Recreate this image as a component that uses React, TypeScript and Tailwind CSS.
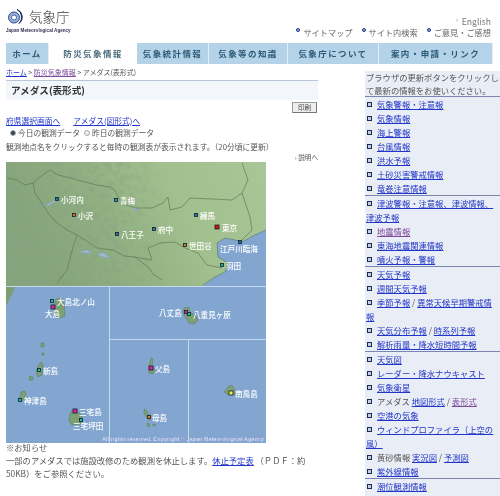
// App.tsx
const navTabs = [
  { label: 'ホーム', width: 'w-[43px]', active: false },
  { label: '防災気象情報', width: 'w-[88px]', active: true },
  { label: '気象統計情報', width: 'w-[72px]', active: false },
  { label: '気象等の知識', width: 'w-[79px]', active: false },
  { label: '気象庁について', width: 'w-[91px]', active: false },
  { label: '案内・申請・リンク', width: 'w-[114px]', active: false },
];

type Station = { x: number; y: number; c: string; name: string; lx: number; ly: number; big?: boolean };

const stations: Station[] = [
  { x: 51, y: 37, c: '#2a6fb0', name: '小河内', lx: 55, ly: 40.5 },
  { x: 68, y: 53, c: '#d8761c', name: '小沢', lx: 72, ly: 56.5 },
  { x: 110, y: 38, c: '#2a8fb0', name: '青梅', lx: 114, ly: 41.5 },
  { x: 111, y: 72, c: '#2a6fb0', name: '八王子', lx: 115, ly: 75.5 },
  { x: 148, y: 67, c: '#2a7fb0', name: '府中', lx: 152, ly: 70.5 },
  { x: 190, y: 53, c: '#2a6fb0', name: '練馬', lx: 194, ly: 56.5 },
  { x: 211, y: 65, c: '#e01010', name: '東京', lx: 216, ly: 68.5, big: true },
  { x: 179, y: 83, c: '#d8761c', name: '世田谷', lx: 183, ly: 86.5 },
  { x: 234, y: 80, c: '#2a6fb0', name: '江戸川臨海', lx: 214, ly: 89.5 },
  { x: 216, y: 103, c: '#20b090', name: '羽田', lx: 220, ly: 106.5 },
  { x: 46, y: 139, c: '#20c0b0', name: '大島北ノ山', lx: 51, ly: 142.5 },
  { x: 47, y: 145, c: '#e020b0', name: '大島', lx: 39, ly: 154.5, big: true },
  { x: 180, y: 150, c: '#e020b0', name: '八丈島', lx: 153, ly: 153.5 },
  { x: 183, y: 152, c: '#20c0b0', name: '八重見ヶ原', lx: 187, ly: 155.5 },
  { x: 33, y: 208, c: '#20c0b0', name: '新島', lx: 37, ly: 211.5 },
  { x: 14, y: 238, c: '#20c0b0', name: '神津島', lx: 18, ly: 241.5 },
  { x: 69, y: 249, c: '#e020b0', name: '三宅島', lx: 73, ly: 252.5, big: true },
  { x: 75, y: 258, c: '#20c0b0', name: '三宅坪田', lx: 67, ly: 266.5 },
  { x: 145, y: 206, c: '#e020b0', name: '父島', lx: 149, ly: 209.5, big: true },
  { x: 143, y: 255, c: '#e8801c', name: '母島', lx: 146, ly: 258.5 },
  { x: 225, y: 231, c: '#f4f040', name: '南鳥島', lx: 229, ly: 234.5, big: true },
];

const islands = [
  'M50 137 L55 136 L58 142 L59 154 L54 156 L49 153 L47 146 Z',
  'M35 200 L37 203 L36 213 L32 215 L30 210 L32 204 Z',
  'M24 214 L27 215 L27 218 L23 218 Z',
  'M35 181 L38 181 L38 185 L35 185 Z',
  'M36 191 L38 191 L38 193 L36 193 Z',
  'M15 230 L19 229 L20 234 L16 239 L14 236 Z',
  'M66 248 L71 249 L76 254 L75 262 L66 263 L63 259 L64 252 Z',
  'M178 146 L183 145 L184 150 L190 154 L192 158 L188 162 L183 161 L180 156 L177 151 Z',
  'M145 196 L147 197 L146 204 L149 208 L147 212 L143 211 L143 204 Z',
  'M138 247 L141 249 L145 256 L144 259 L141 256 L138 251 Z',
  'M141 261 L144 262 L143 265 L141 264 Z',
  'M147 262 L150 263 L149 264 L147 264 Z',
  'M223 224 L226 223 L229 229 L229 233 L221 232 L218 230 Z',
];

function TokyoMap() {
  return (
    <svg viewBox="0 0 260 281" className="block w-[260px] h-[281px]">
      <defs>
        <linearGradient id="land" x1="0" y1="0.25" x2="1" y2="0">
          <stop offset="0" stopColor="#84a47b" />
          <stop offset="0.35" stopColor="#93b282" />
          <stop offset="0.6" stopColor="#a2bf8e" />
          <stop offset="1" stopColor="#a9c697" />
        </linearGradient>
        <linearGradient id="fade" x1="0" y1="0" x2="1" y2="0">
          <stop offset="0" stopColor="#fff" />
          <stop offset="0.42" stopColor="#fff" />
          <stop offset="0.62" stopColor="#000" />
        </linearGradient>
        <mask id="reliefMask">
          <rect width="260" height="124" fill="url(#fade)" />
        </mask>
        <filter id="relief" x="0" y="0" width="1" height="1">
          <feTurbulence type="fractalNoise" baseFrequency="0.16" numOctaves="3" seed="7" />
          <feColorMatrix values="0 0 0 0 0.25  0 0 0 0 0.36  0 0 0 0 0.24  3 0 0 0 -1.25" />
        </filter>
      </defs>
      <rect width="260" height="281" fill="#82a6d0" />
      <rect width="260" height="124" fill="url(#land)" />
      <g mask="url(#reliefMask)" opacity="0.55">
        <rect width="260" height="124" filter="url(#relief)" />
      </g>
      <path
        d="M260 68 L249 73 L236 80 L229 78 L219 76 L211 81 L212 95 L222 101 L219 110 L209 115 L197 124 H260 Z"
        fill="#82a6d0"
      />
      <path
        d="M260 68 L249 73 L236 80 L229 78 L219 76 L211 81 L212 95 L222 101 L219 110 L209 115 L197 123"
        fill="none"
        stroke="#6b8a84"
        strokeWidth="0.9"
      />
      <path d="M38 43 L45 41 L52 36 L50 39 L44 43 Z M74 90 L80 88 L86 91 L80 91 Z M91 92 L98 91 L104 96 L97 95 Z M126 45 L134 48 L128 48 Z" fill="#9fbad4" stroke="#88a6c8" strokeWidth="0.6" />
      <g fill="none" stroke="#5d7a58" strokeWidth="0.7">
        <path d="M1 16 L11 18 L19 23 L27 21 L34 15 L44 8 L52 13 L61 15 L71 18 L91 23 L104 25 L109 28 L112 35 L118 42 L129 46 L146 46 L157 41 L162 35 L164 48 L176 45 L184 36 L206 37 L226 38 L236 31 L242 18 L236 1" />
        <path d="M236 31 L244 55 L246 68 L236 78" />
        <path d="M27 21 L29 31 L37 43 L42 51 L51 61 L61 68 L71 73 L79 78 L91 86 L107 88 L118 94 L129 95 L142 105 L147 112 L156 118 M129 95 L146 98 L142 86 L154 81 L169 80 L179 86 L192 91 L201 103 L216 106" />
        <path d="M71 73 L67 85 L61 108 L51 121" />
      </g>
      <path d="M0 125 H9 L6 132 L2 140 L0 144 Z" fill="#7d9e72" />
      <g fill="#7c9f74" stroke="#55785a" strokeWidth="0.5">
        {islands.map((d, i) => (
          <path key={i} d={d} />
        ))}
      </g>
      <g stroke="#c4d8ee" strokeWidth="1" fill="none">
        <path d="M0 124.5 H260" />
        <path d="M103.5 124 V281" />
        <path d="M103 177.5 H260" />
        <path d="M182.5 177 V281" />
      </g>
      {stations.map((s) => (
        <rect
          key={s.name}
          x={s.x - (s.big ? 2 : 1.5)}
          y={s.y - (s.big ? 2 : 1.5)}
          width={s.big ? 4 : 3}
          height={s.big ? 4 : 3}
          fill={s.c}
          stroke="#10202c"
          strokeWidth="0.8"
        />
      ))}
      <g fill="#fff" fontSize="7.6" fontWeight="500" fontFamily="'Noto Sans CJK JP', sans-serif">
        {stations.map((s) => (
          <text key={s.name} x={s.lx} y={s.ly}>
            {s.name}
          </text>
        ))}
      </g>
      <text x="96" y="279" fill="#eef2fb" fontSize="5.5" fontWeight="700" fontFamily="'Liberation Sans', sans-serif" stroke="#6a78c0" strokeWidth="0.15">
        All rights reserved. Copyright © Japan Meteorological Agency
      </text>
    </svg>
  );
}

function Square() {
  return <span className="inline-block w-[3px] h-[3px] border border-[#1c2c50] bg-[#c4cee4] ml-[1px] mr-[5px] align-[1px] box-content" />;
}

const A = ({ children, visited }: { children: React.ReactNode; visited?: boolean }) => (
  <a href="#" className={visited ? 'underline text-[#7d4a9c]' : 'underline text-[#2236c8]'}>
    {children}
  </a>
);

function Group({ rows, last }: { rows: React.ReactNode[]; last?: boolean }) {
  return (
    <ul className={last ? '' : 'border-b border-[#7c84b0]'}>
      {rows.map((r, i) => (
        <li key={i} className="pl-[1px]">
          <Square />
          {r}
        </li>
      ))}
    </ul>
  );
}

function Sidebar() {
  return (
    <aside className="w-[135px] bg-[#e9edf5] text-[8.3px] leading-[14px] text-[#555] mt-[7px] shrink-0 overflow-hidden">
      <p className="pl-[1px] leading-[12.5px] border-b border-[#7c84b0]">ブラウザの更新ボタンをクリックして最新の情報をお使いください。</p>
      <Group
        rows={[
          <A>気象警報・注意報</A>,
          <A>気象情報</A>,
          <A>海上警報</A>,
          <A>台風情報</A>,
          <A>洪水予報</A>,
          <A>土砂災害警戒情報</A>,
          <A>竜巻注意情報</A>,
        ]}
      />
      <Group
        rows={[
          <A>津波警報・注意報、津波情報、津波予報</A>,
          <A visited>地震情報</A>,
          <A>東海地震関連情報</A>,
          <A>噴火予報・警報</A>,
        ]}
      />
      <Group
        rows={[
          <A>天気予報</A>,
          <A>週間天気予報</A>,
          <>
            <A>季節予報</A> / <A>異常天候早期警戒情報</A>
          </>,
          <>
            <A>天気分布予報</A> / <A>時系列予報</A>
          </>,
          <A>解析雨量・降水短時間予報</A>,
        ]}
      />
      <Group
        rows={[
          <A>天気図</A>,
          <A>レーダー・降水ナウキャスト</A>,
          <A>気象衛星</A>,
          <>
            アメダス <A>地図形式</A> / <A visited>表形式</A>
          </>,
          <A>空港の気象</A>,
          <A>ウィンドプロファイラ（上空の風）</A>,
          <>
            黄砂情報 <A>実況図</A> / <A>予測図</A>
          </>,
          <A>紫外線情報</A>,
        ]}
      />
      <Group rows={[<A>潮位観測情報</A>, <A>地球環境</A>]} last />
    </aside>
  );
}

function Bullet() {
  return <span className="inline-block w-[2px] h-[2px] rounded-full border-[1.5px] border-[#16308a] bg-[#a8b8e4] mr-[3px] mb-[4px] box-content" />;
}

export default function App() {
  return (
    <div className="w-[500px] h-[496px] overflow-hidden bg-white text-[#555] font-['Noto_Sans_CJK_JP',sans-serif] blur-[0.35px]">
      <header className="h-[43px] pl-[6px] pr-[9px] flex justify-between">
        <div className="pt-[7px]">
          <div className="flex items-center gap-[5px] h-[19px]">
            <svg viewBox="0 0 18 18" className="w-[18px] h-[18px]">
              <circle cx="8" cy="9.5" r="5.5" fill="#9ab0d4" stroke="#2c4a90" />
              <circle cx="8" cy="9.5" r="2.5" fill="#fff" stroke="#2c4a90" strokeWidth="0.8" />
              <path d="M11 1.5 A8 8 0 0 1 13 15.5 A9 9 0 0 0 11 1.5 Z" fill="#1c2c70" stroke="#1c2c70" />
            </svg>
            <span className="text-[13.5px] leading-none text-[#333] font-light">気象庁</span>
          </div>
          <p className="text-[4.6px] leading-[6px] font-['Liberation_Sans',sans-serif] font-bold text-[#335] mt-[2px]">Japan Meteorological Agency</p>
        </div>
        <div className="text-[8.2px] leading-[12px] text-right pt-[14px]">
          <p className="text-[#777] text-[8.6px]"><span className="text-[6px] align-[3px] mr-[4px]">›</span>English</p>
          <p className="flex gap-[9px] mt-[-1px] text-[#666]">
            <span><Bullet />サイトマップ</span>
            <span><Bullet />サイト内検索</span>
            <span><Bullet />ご意見・ご感想</span>
          </p>
        </div>
      </header>

      <nav className="flex pl-[6px] h-[21px]">
        {navTabs.map((t) => (
          <div
            key={t.label}
            className={`${t.width} flex items-center justify-center text-[8.5px] font-bold tracking-[1.4px] ${
              t.active ? 'bg-white text-[#4a6a7c]' : 'bg-[#b5d3e8] text-[#2b5a78] border-r border-[#e4eef6]'
            }`}
          >
            {t.label}
          </div>
        ))}
      </nav>

      <div className="flex pl-[6px] gap-[47px]">
        <main className="w-[312px] shrink-0">
          <p className="text-[7px] leading-[16px] h-[16px]">
            <A>ホーム</A> &gt; <A visited>防災気象情報</A> &gt; アメダス(表形式)
          </p>
          <h1 className="h-[20px] border-t border-[#b9c6d8] bg-[#f3f7fc] pl-[5px] text-[9.6px] font-bold leading-[19px] text-[#333]">アメダス(表形式)</h1>
          <div className="flex justify-end mt-[2px] pr-[1px]">
            <button className="w-[25px] h-[11px] border border-[#999] border-r-[#777] border-b-[#777] bg-[#eee] text-[6.6px] leading-[9px] text-[#444] rounded-[1px]">印刷</button>
          </div>
          <p className="mt-[2px] text-[7.75px] leading-[12px] flex gap-[13px]">
            <A>府県選択画面へ</A>
            <A>アメダス(図形式)へ</A>
          </p>
          <p className="text-[7.75px] leading-[12px] mt-[0px] pl-[4px] flex items-center">
            <span className="w-[6px] h-[6px] rounded-full border border-[#aaa] bg-[#345] mr-[2px]" />
            今日の観測データ
            <span className="w-[6px] h-[6px] rounded-full border border-[#aaa] bg-[#eee] ml-[4px] mr-[2px]" />
            昨日の観測データ
          </p>
          <p className="text-[7.75px] leading-[13px] mt-[1px]">観測地点名をクリックすると毎時の観測表が表示されます。（20分頃に更新）</p>
          <p className="text-[6.6px] leading-[9px] text-right">› 説明へ</p>
          <TokyoMap />
          <div className="text-[8.3px] leading-[13px] pr-[4px] mt-[-2px]">
            <p>※お知らせ</p>
            <p>
              一部のアメダスでは施設改修のため観測を休止します。<A>休止予定表</A> （ＰＤＦ：約50KB）をご参照ください。
            </p>
          </div>
        </main>
        <Sidebar />
      </div>
    </div>
  );
}
